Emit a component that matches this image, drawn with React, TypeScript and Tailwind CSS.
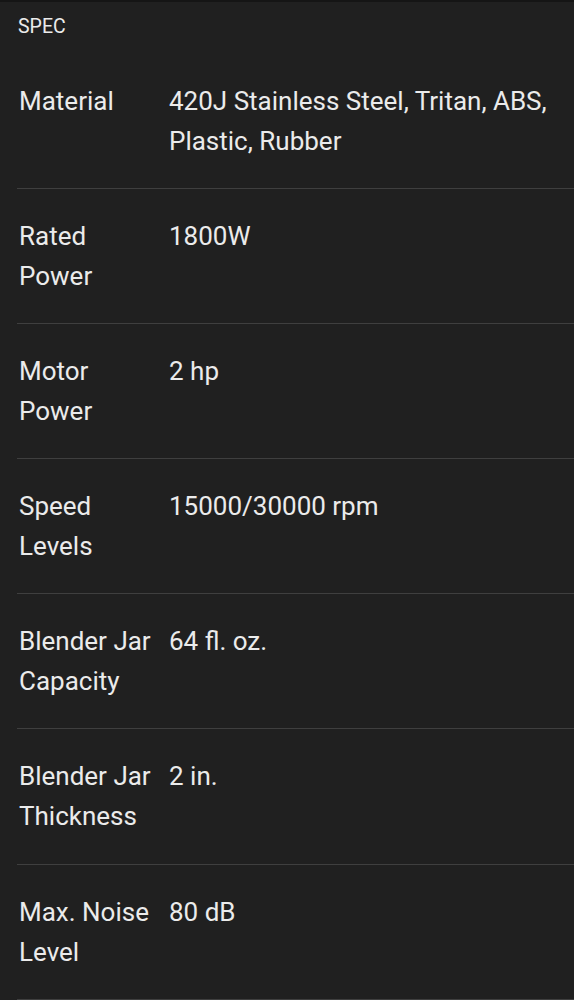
const rows: [string, string][] = [
  ["Material", "420J Stainless Steel, Tritan, ABS, Plastic, Rubber"],
  ["Rated Power", "1800W"],
  ["Motor Power", "2 hp"],
  ["Speed Levels", "15000/30000 rpm"],
  ["Blender Jar Capacity", "64 fl. oz."],
  ["Blender Jar Thickness", "2 in."],
  ["Max. Noise Level", "80 dB"],
];

export default function App() {
  return (
    <div
      className="min-h-[1000px] w-full bg-[#202020] text-[#ebebeb] border-t-2 border-[#151515]"
      style={{ fontFamily: "Roboto, 'Noto Sans', sans-serif" }}
    >
      <div className="h-[50px] flex items-center pl-[18px] text-[19.5px] leading-6">SPEC</div>
      <div className="pl-[17px] mt-[1.5px]">
        {rows.map(([k, v]) => (
          <div
            key={k}
            className="flex pt-[27px] pb-[27.2px] border-b border-[#3f3f3f] text-[26px] leading-[40px]"
          >
            <div className="w-[140px] mr-[12px] pl-[2px] shrink-0">{k}</div>
            <div className="flex-1 pr-[18px]">{v}</div>
          </div>
        ))}
      </div>
    </div>
  );
}
